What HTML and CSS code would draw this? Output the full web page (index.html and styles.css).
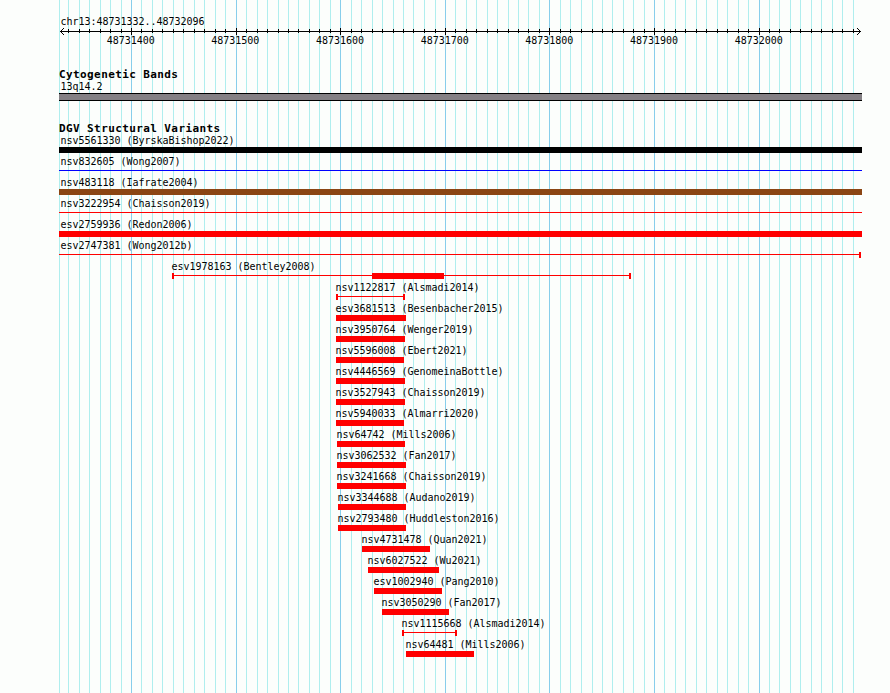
FILE: index.html
```
<!DOCTYPE html>
<html lang="en">
<head>
<meta charset="utf-8">
<title>chr13:48731332..48732096</title>
<link rel="stylesheet" href="styles.css">
</head>
<body>
<main class="browser">
  <svg class="grid" id="grid" width="803" height="693" shape-rendering="crispEdges"></svg>
  <header class="region">chr13:48731332..48732096</header>
  <svg class="ruler" id="ruler" width="803" height="7" shape-rendering="crispEdges"></svg>
  <div class="scale"><span>48731400</span><span>48731500</span><span>48731600</span><span>48731700</span><span>48731800</span><span>48731900</span><span>48732000</span></div>
  <section class="cyto">
    <h2>Cytogenetic Bands</h2>
    <div class="label">13q14.2</div>
    <div class="band"></div>
  </section>
  <section class="variants">
    <h2>DGV Structural Variants</h2>
    <div id="rows"></div>
  </section>
</main>
<script src="script.js"></script>
</body>
</html>
```
FILE: styles.css
```
body { margin: 0; background: #fcfefc; color: #000; }
.browser {
  position: relative;
  box-sizing: border-box;
  width: 862px;
  height: 693px;
  padding: 16px 0 0 59px;
  overflow: hidden;
  font: 10px/12px "DejaVu Sans Mono", "Liberation Mono", monospace;
  letter-spacing: -0.02px;
}
.grid { position: absolute; left: 59px; top: 0; z-index: -1; }
.region { height: 12px; padding-left: 1.4px; }
.ruler { display: block; }
.scale { display: grid; grid-template-columns: repeat(7, 104.67px); height: 12px; padding-left: 19.4px; }
.scale span { text-align: center; }
h2 { margin: 0; font-size: 11px; line-height: 12px; font-weight: bold; letter-spacing: 0.4px; }
.cyto { padding-top: 22px; height: 54px; box-sizing: border-box; }
.label { padding-left: 1.4px; height: 12px; line-height: 12px; white-space: nowrap; }
.band { box-sizing: border-box; height: 8px; background: #848084; border: solid #000; border-width: 1px 0; }
.variants { padding-top: 22px; }
.row { height: 21px; }
.row .label { height: 12px; }
.glyph { display: flex; align-items: center; height: 6px; }
.line { height: 1px; flex: 1; margin-bottom: 1px; background: currentColor; }
.box { height: 6px; background: currentColor; }
.cap { width: 2px; height: 6px; background: currentColor; }
.core-lead { flex: 0 0 198px; }
.core-box { width: 72px; }
```
FILE: script.js
```
const LEFT = 59;
const gridX = [68,79,89,100,110,121,131,141,152,162,173,183,194,204,215,225,236,246,257,267,
  278,288,298,309,319,330,340,351,361,372,382,393,403,413,424,435,445,455,466,476,487,497,508,
  518,528,539,549,560,570,581,592,602,612,623,633,644,654,664,675,685,696,706,717,727,738,748,
  759,769,779,790,800,811,821,832,842,853];
const rect = (x, y, w, h, c) => `<rect x="${x}" y="${y}" width="${w}" height="${h}" fill="${c}"/>`;
const isMajor = i => i % 10 === 6;

document.getElementById("grid").innerHTML = rect(0, 0, 1, 693, "#afeeee") +
  gridX.map((x, i) => rect(x - LEFT, 0, 1, 693, isMajor(i) ? "#87ceeb" : "#afeeee")).join("");

document.getElementById("ruler").innerHTML = rect(1, 3, 801, 1, "#000") +
  gridX.map((x, i) => isMajor(i) ? rect(x - LEFT, 0, 1, 7, "#000") : rect(x - LEFT, 1, 1, 4, "#000")).join("") +
  [1, 2, 3].map(d => rect(1 + d, 3 - d, 1, 1, "#000") + rect(1 + d, 3 + d, 1, 1, "#000") +
    rect(801 - d, 3 - d, 1, 1, "#000") + rect(801 - d, 3 + d, 1, 1, "#000")).join("");

// name, label x, start, end, kind, colour
const rows = [
  ["nsv5561330 (ByrskaBishop2022)", 60, 59, 862, "box", "#000"],
  ["nsv832605 (Wong2007)", 60, 59, 862, "line", "#00f"],
  ["nsv483118 (Iafrate2004)", 60, 59, 862, "box", "#8b4513"],
  ["nsv3222954 (Chaisson2019)", 60, 59, 862, "line", "#f00"],
  ["esv2759936 (Redon2006)", 60, 59, 862, "box", "#f00"],
  ["esv2747381 (Wong2012b)", 60, 59, 861, "endcap", "#f00"],
  ["esv1978163 (Bentley2008)", 171, 172, 631, "core", "#f00"],
  ["nsv1122817 (Alsmadi2014)", 335, 336, 405, "caps", "#f00"],
  ["esv3681513 (Besenbacher2015)", 335, 336, 406, "box", "#f00"],
  ["nsv3950764 (Wenger2019)", 335, 336, 405, "box", "#f00"],
  ["nsv5596008 (Ebert2021)", 335, 336, 404, "box", "#f00"],
  ["nsv4446569 (GenomeinaBottle)", 335, 336, 405, "box", "#f00"],
  ["nsv3527943 (Chaisson2019)", 335, 336, 405, "box", "#f00"],
  ["nsv5940033 (Almarri2020)", 335, 336, 404, "box", "#f00"],
  ["nsv64742 (Mills2006)", 336, 337, 405, "box", "#f00"],
  ["nsv3062532 (Fan2017)", 336, 337, 406, "box", "#f00"],
  ["nsv3241668 (Chaisson2019)", 336, 337, 406, "box", "#f00"],
  ["nsv3344688 (Audano2019)", 337, 338, 406, "box", "#f00"],
  ["nsv2793480 (Huddleston2016)", 337, 338, 406, "box", "#f00"],
  ["nsv4731478 (Quan2021)", 361, 362, 430, "box", "#f00"],
  ["nsv6027522 (Wu2021)", 367, 368, 439, "box", "#f00"],
  ["esv1002940 (Pang2010)", 373, 374, 442, "box", "#f00"],
  ["nsv3050290 (Fan2017)", 381, 382, 449, "box", "#f00"],
  ["nsv1115668 (Alsmadi2014)", 401, 402, 457, "caps", "#f00"],
  ["nsv64481 (Mills2006)", 405, 406, 474, "box", "#f00"]
];
const line = '<i class="line"></i>', cap = '<i class="cap"></i>';
const parts = {
  box: w => `<i class="box" style="width:${w}px"></i>`,
  line: () => line,
  endcap: () => line + cap,
  caps: () => cap + line + cap,
  core: () => cap + '<i class="line core-lead"></i><i class="box core-box"></i>' + line + cap
};
document.getElementById("rows").innerHTML = rows.map(([name, lx, a, b, kind, color]) =>
  `<div class="row"><div class="label" style="padding-left:${lx - LEFT + 0.4}px">${name}</div>` +
  `<div class="glyph" style="margin-left:${a - LEFT}px;width:${b - a}px;color:${color}">${parts[kind](b - a)}</div></div>`).join("");
```
